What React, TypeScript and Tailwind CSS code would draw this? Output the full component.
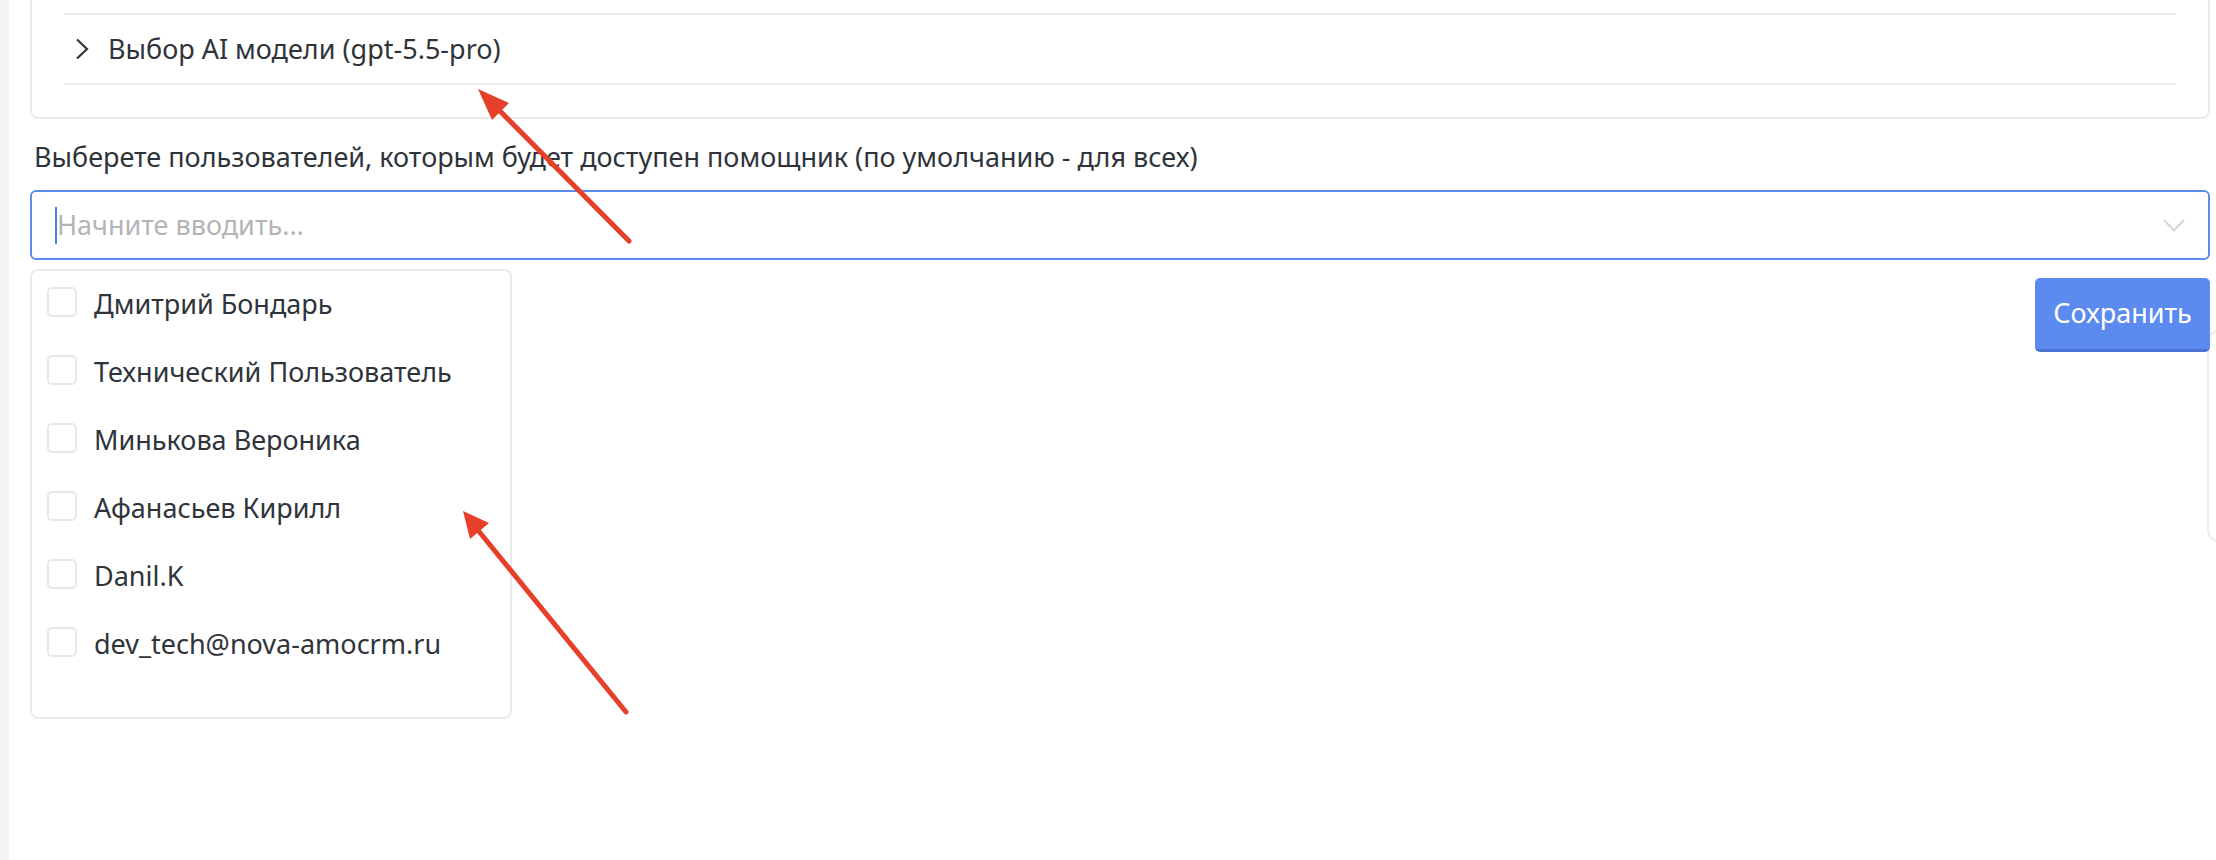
import React from "react";

const users = [
  "Дмитрий Бондарь",
  "Технический Пользователь",
  "Минькова Вероника",
  "Афанасьев Кирилл",
  "Danil.K",
  "dev_tech@nova-amocrm.ru",
];

const Arrows: React.FC = () => (
  <svg
    className="pointer-events-none absolute left-0 top-0"
    width="2216"
    height="860"
    viewBox="0 0 2216 860"
  >
    <g stroke="#e6402a" strokeWidth="5" strokeLinecap="round">
      <line x1="629" y1="241" x2="496" y2="107" />
      <line x1="626" y1="712" x2="477" y2="529" />
    </g>
    <g fill="#e6402a">
      <polygon points="478,89 509,103 492,120" />
      <polygon points="463,511 489,523 470,539" />
    </g>
  </svg>
);

export default function App() {
  return (
    <div className="relative flex h-[860px] w-full overflow-hidden bg-white font-['Noto_Sans',sans-serif] text-[27px] text-[#2f343a]">
      <div className="w-[9px] shrink-0 bg-[#f3f3f5]" />

      <div className="flex-1 pl-[21px] pr-[6px]">
        {/* accordion card, top is scrolled away */}
        <div className="rounded-b-[8px] border-x-2 border-b-2 border-[#ebebed] px-8 pt-[13px] pb-[32px]">
          <div className="border-y-2 border-[#ededf1]">
            <div className="flex h-[68px] items-center">
              <svg
                className="ml-[11px] shrink-0"
                width="14"
                height="22"
                viewBox="0 0 14 22"
                fill="none"
                stroke="#2f343a"
                strokeWidth="2.2"
              >
                <polyline points="2,1.5 12,11 2,20.5" />
              </svg>
              <span className="ml-[19px] leading-[36px]">
                Выбор AI модели (gpt-5.5-pro)
              </span>
            </div>
          </div>
        </div>

        <div className="mt-[20px] ml-[4px] leading-[36px]">
          Выберете пользователей, которым будет доступен помощник (по умолчанию - для всех)
        </div>

        <div className="mt-[15px] flex h-[70px] items-center rounded-[6px] border-2 border-[#5b8def] pl-[23px] pr-[23px]">
          <span className="h-[37px] w-[2px] bg-[#4a7be6]" />
          <span className="flex-1 leading-[36px] text-[#b4b4b6]">
            Начните вводить...
          </span>
          <svg
            width="22"
            height="13"
            viewBox="0 0 22 13"
            fill="none"
            stroke="#d6d6d9"
            strokeWidth="2"
          >
            <polyline points="1,1 11,11.5 21,1" />
          </svg>
        </div>

        <div className="flex items-start justify-between">
          <div className="mt-[9px] w-[482px] rounded-[8px] border-2 border-[#ebebed] pl-[15px] pt-[16px] pb-[60px]">
            <div className="flex flex-col gap-[38px]">
              {users.map((u) => (
                <label key={u} className="flex h-[30px] items-center">
                  <span className="h-[30px] w-[30px] shrink-0 rounded-[5px] border-2 border-[#e7e7ea] bg-white" />
                  <span className="ml-[17px] pt-[3px] leading-[30px]">{u}</span>
                </label>
              ))}
            </div>
          </div>

          <button className="relative z-10 mt-[18px] h-[74px] w-[175px] rounded-[5px] border-b-[3px] border-[#4a74d4] bg-[#5b8bef] text-white">
            Сохранить
          </button>
        </div>
      </div>

      {/* edge of a neighbouring panel */}
      <div className="absolute right-[-30px] top-[330px] h-[212px] w-[39px] rounded-[12px] border-2 border-[#ececef] bg-white" />

      <Arrows />
    </div>
  );
}
